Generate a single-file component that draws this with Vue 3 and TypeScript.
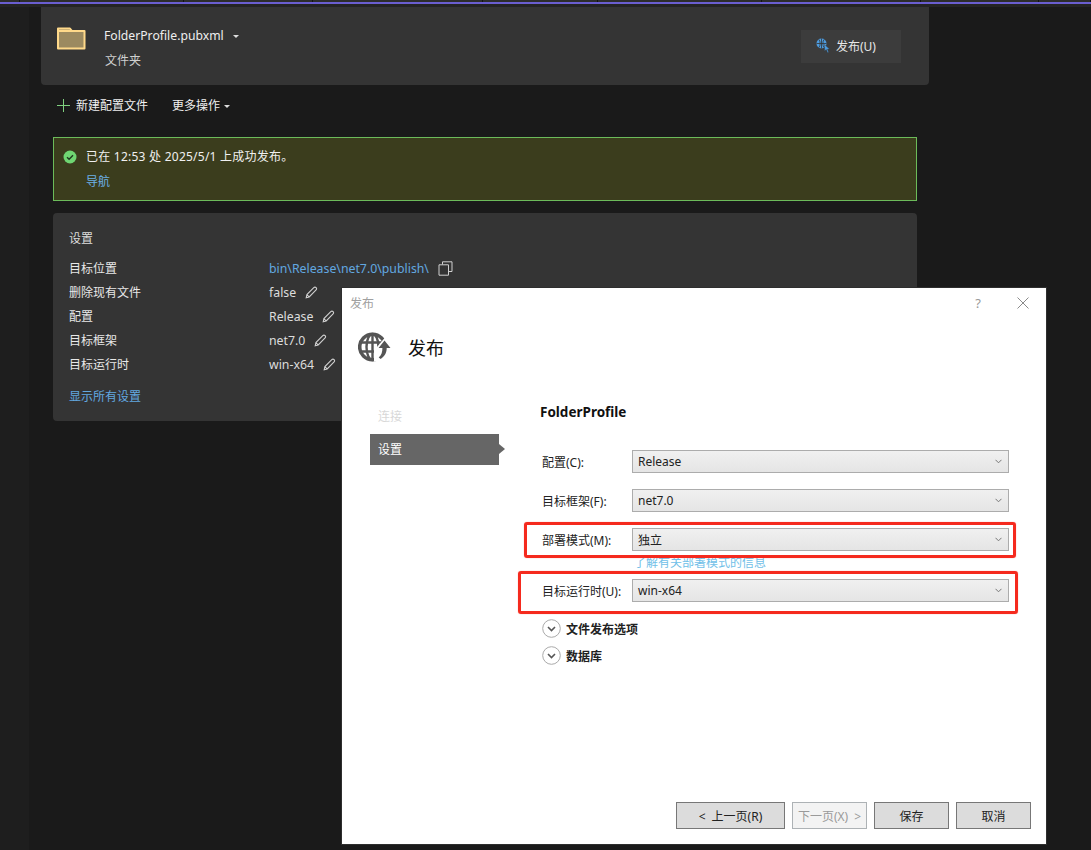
<script setup lang="ts">
const ticks: number[] = [20, 164, 129, 170, 115, 164, 159, 118, 52]
interface Row { label: string; value: string; link?: boolean }
const rows: Row[] = [
  { label: '目标位置', value: 'bin\\Release\\net7.0\\publish\\', link: true },
  { label: '删除现有文件', value: 'false' },
  { label: '配置', value: 'Release' },
  { label: '目标框架', value: 'net7.0' },
  { label: '目标运行时', value: 'win-x64' }
]
const expanders: string[] = ['文件发布选项', '数据库']
</script>

<template>
  <div class="page">
    <div class="top-strip">
      <div class="ticks"><span v-for="(t, i) in ticks" :key="i" :style="{ width: t + 'px' }"></span></div>
      <div class="purple"></div>
    </div>
    <div class="body">
      <div class="gutter"></div>
      <main class="main">
        <section class="head-card">
          <svg class="folder" width="30" height="24" viewBox="0 0 30 24">
            <path d="M2 5V2.500h12l2 2.500h12.500v17.500H2z" fill="#9c8a60" stroke="#ffd98a" stroke-width="2" stroke-linejoin="round" />
            <path d="M2 5h14" stroke="#ffd98a" stroke-width="2" />
          </svg>
          <div class="head-text">
            <div class="profile">FolderProfile.pubxml<i class="caret"></i></div>
            <div class="sub">文件夹</div>
          </div>
          <div class="publish-btn">
            <svg width="15" height="15" viewBox="0 0 15 15">
              <circle cx="5.500" cy="5.500" r="5" fill="#4d9ce0" />
              <path d="M.5 5.500h10M5.500.5v10M3 1.500c1.500 2.500 1.500 5.500 0 8M8 1.500c-1.500 2.500-1.500 5.500 0 8" stroke="#343434" stroke-width="0.8" fill="none" />
              <path d="M8.500 6.500l5 4.500-2 .2 1.200 3-1.200.6-1.200-3.200-1.700 1.400z" fill="#4d9ce0" stroke="#343434" stroke-width="0.4" />
            </svg>
            <span>发布(U)</span>
          </div>
        </section>

        <div class="content">
          <div class="toolbar">
            <svg width="13" height="13" viewBox="0 0 13 13"><path d="M6.500 0v13M0 6.500h13" stroke="#7fd07f" stroke-width="1" /></svg>
            <span class="tb-new">新建配置文件</span>
            <span class="tb-more">更多操作<i class="caret small"></i></span>
          </div>

          <div class="alert">
            <div class="alert-line">
              <svg width="14" height="14" viewBox="0 0 14 14">
                <circle cx="7" cy="7" r="6.500" fill="#6fd672" />
                <path d="M4 7.200l2.100 2.100 3.900-4" stroke="#1f3a1f" stroke-width="1.400" fill="none" />
              </svg>
              <span>已在 12:53 处 2025/5/1 上成功发布。</span>
            </div>
            <a class="nav-link">导航</a>
          </div>

          <section class="settings">
            <div class="settings-title">设置</div>
            <div class="settings-grid">
              <template v-for="r in rows" :key="r.label">
                <span class="s-label">{{ r.label }}</span>
                <span class="s-value" :class="{ link: r.link }">
                  {{ r.value }}
                  <svg v-if="r.link" class="s-icon" width="15" height="15" viewBox="0 0 15 15">
                    <path d="M4.500 3.500V.8h9.500v9.700h-3.200M1 3.800h9.500v10.400H1z" fill="none" stroke="#d0d0d0" stroke-width="1" />
                  </svg>
                  <svg v-else class="s-icon" width="13" height="13" viewBox="0 0 13 13">
                    <path d="M1.200 11.800l.7-3.200L8.800 1.600c.7-.7 1.600-.7 2.300 0s.7 1.600 0 2.300L4.200 11zM2 8.600l2.200 2.400" fill="none" stroke="#cfcfcf" stroke-width="1.100" />
                  </svg>
                </span>
              </template>
            </div>
            <a class="show-all">显示所有设置</a>
          </section>
        </div>
      </main>
    </div>

    <div class="dialog">
      <div class="d-titlebar">
        <span class="d-caption">发布</span>
        <span class="d-help">?</span>
        <svg width="12" height="12" viewBox="0 0 12 12"><path d="M.5.5l11 11M11.500.5l-11 11" stroke="#8a8a8a" stroke-width="1" /></svg>
      </div>
      <div class="d-header">
        <svg width="33" height="30" viewBox="0 0 33 30">
          <g fill="none" stroke="#555" stroke-width="2.400">
            <circle cx="14.500" cy="15" r="12.800" stroke-width="3.600" />
            <ellipse cx="14.500" cy="15" rx="6" ry="13" />
            <path d="M14.500 2v26M2.500 10.500h24M2.500 19.500h24" />
          </g>
          <path d="M27 5.500l8 10H30v4c0 4-3 8-8 10h-6V15h5v0h-2z" fill="#fff" />
          <path d="M26.500 8.500l6 7.500h-3.800c0 4-1.500 8-6 11l-2-1.500c3-2.500 3.700-6 3.700-9.500h-3.800z" fill="#555" />
        </svg>
        <span class="d-title">发布</span>
      </div>
      <div class="d-body">
        <nav class="d-nav">
          <div class="nav-item disabled">连接</div>
          <div class="nav-item active">设置</div>
        </nav>
        <div class="d-form">
          <div class="form-title">FolderProfile</div>
          <div class="form-row">
            <label>配置(C):</label>
            <div class="select">Release<svg width="7" height="5" viewBox="0 0 7 5"><path d="M.5.8l3 3 3-3" fill="none" stroke="#777" stroke-width="1" /></svg></div>
          </div>
          <div class="form-row">
            <label>目标框架(F):</label>
            <div class="select">net7.0<svg width="7" height="5" viewBox="0 0 7 5"><path d="M.5.8l3 3 3-3" fill="none" stroke="#777" stroke-width="1" /></svg></div>
          </div>
          <div class="form-row">
            <label>部署模式(M):</label>
            <div class="select">独立<svg width="7" height="5" viewBox="0 0 7 5"><path d="M.5.8l3 3 3-3" fill="none" stroke="#777" stroke-width="1" /></svg></div>
          </div>
          <div class="learn">了解有关部署模式的信息</div>
          <div class="form-row runtime">
            <label>目标运行时(U):</label>
            <div class="select">win-x64<svg width="7" height="5" viewBox="0 0 7 5"><path d="M.5.8l3 3 3-3" fill="none" stroke="#777" stroke-width="1" /></svg></div>
          </div>
          <div class="expanders">
            <div v-for="e in expanders" :key="e" class="expander">
              <svg width="19" height="19" viewBox="0 0 19 19">
                <circle cx="9.500" cy="9.500" r="8.800" fill="#fff" stroke="#aaa" stroke-width="1" />
                <path d="M6 8l3.500 3.500L13 8" fill="none" stroke="#555" stroke-width="1.600" />
              </svg>
              <span>{{ e }}</span>
            </div>
          </div>
        </div>
      </div>
      <div class="d-footer">
        <button class="btn prev"><span class="lt">&lt;</span>上一页(R)</button>
        <button class="btn next" disabled>下一页(X)<span class="gt">&gt;</span></button>
        <button class="btn save">保存</button>
        <button class="btn cancel">取消</button>
      </div>
      <div class="mark mark-a"></div>
      <div class="mark mark-b"></div>
    </div>
  </div>
</template>

<style scoped>
.page {
  position: relative;
  width: 1091px;
  height: 850px;
  overflow: hidden;
  background: #1a1a1a;
  font-family: "Noto Sans", "Noto Sans CJK SC", sans-serif;
  font-size: 12px;
  color: #e8e8e8;
  display: flex;
  flex-direction: column;
}
.top-strip { height: 7px; background: #242424; flex: none; }
.ticks { display: flex; height: 2px; background: #2c2c2c; }
.ticks span { box-sizing: border-box; height: 2px; border-right: 1px solid #111; }
.purple { height: 2px; background: #6a5ed0; }
.body { flex: 1; display: flex; min-height: 0; }
.gutter { width: 29px; background: #1e1e1e; flex: none; }
.main { width: 900px; padding-left: 12px; box-sizing: border-box; }
.head-card {
  width: 888px;
  height: 78px;
  box-sizing: border-box;
  background: #343434;
  border-radius: 0 0 4px 4px;
  display: flex;
  align-items: flex-start;
  padding: 19px 28px 0 15px;
}
.folder { flex: none; }
.head-text { margin-left: 18px; flex: 1; }
.profile { font-size: 12.200px; line-height: 18px; color: #eee; padding-top: 1px; }
.sub { margin-top: 7px; line-height: 18px; color: #cfcfcf; padding-left: 1px; }
.caret {
  display: inline-block;
  margin-left: 9px;
  vertical-align: middle;
  border-left: 3.500px solid transparent;
  border-right: 3.500px solid transparent;
  border-top: 3.500px solid #ddd;
}
.caret.small { margin-left: 4px; }
.publish-btn {
  width: 100px;
  height: 33px;
  margin-top: 4px;
  padding-bottom: 2px;
  background: #3c3c3c;
  display: flex;
  align-items: center;
  padding-left: 15px;
  box-sizing: border-box;
  gap: 5px;
}
.content { width: 864px; margin-left: 12px; }
.toolbar { display: flex; align-items: center; height: 20px; margin-top: 10px; padding-left: 4px; color: #f0f0f0; }
.tb-new { margin-left: 6px; }
.tb-more { margin-left: 24px; }
.alert {
  margin-top: 22px;
  height: 64px;
  box-sizing: border-box;
  background: #3b3d1d;
  border: 1px solid #6cbb5a;
  padding: 9px 0 0 9px;
}
.alert-line { display: flex; align-items: center; gap: 9px; line-height: 20px; color: #f0f0f0; letter-spacing: 0.240px; }
.nav-link { display: block; margin: 5px 0 0 23px; line-height: 20px; color: #6cb0e6; }
.settings {
  margin-top: 12px;
  height: 208px;
  box-sizing: border-box;
  background: #343434;
  border-radius: 4px;
  padding: 16px 16px 0;
}
.settings-title { line-height: 20px; color: #ddd; }
.settings-grid { display: grid; grid-template-columns: 200px 1fr; grid-auto-rows: 24px; margin-top: 7px; align-items: center; }
.s-label { color: #e8e8e8; }
.s-value { display: flex; align-items: center; gap: 9px; color: #ddd; font-size: 12.300px; }
.s-value.link { color: #62a8e0; }
.show-all { display: block; margin-top: 11px; line-height: 20px; color: #62a8e0; }

.dialog {
  position: absolute;
  left: 342px;
  top: 288px;
  width: 704px;
  height: 556px;
  background: #fff;
  color: #111;
  display: flex;
  flex-direction: column;
  box-shadow: 0 0 0 1px #2e2e2e;
}
.d-titlebar { height: 30px; display: flex; align-items: center; padding: 0 17px 0 8px; flex: none; }
.d-caption { flex: 1; color: #a0a0a0; }
.d-help { color: #999; margin-right: 36px; font-size: 13px; }
.d-header { height: 58px; display: flex; align-items: center; padding-left: 16px; flex: none; }
.d-title { margin-left: 17px; font-size: 18px; color: #111; }
.d-body { display: flex; flex: 1; padding-left: 28px; min-height: 0; }
.d-nav { width: 129px; padding-top: 29px; flex: none; }
.nav-item { height: 31px; line-height: 31px; padding-left: 8px; position: relative; box-sizing: border-box; }
.nav-item.disabled { height: 29px; line-height: 24px; color: #d8d8d8; }
.nav-item.active { background: #666; color: #fff; }
.nav-item.active::after {
  content: "";
  position: absolute;
  left: 100%;
  top: 10px;
  border-top: 5.500px solid transparent;
  border-bottom: 5.500px solid transparent;
  border-left: 6px solid #666;
}
.d-form { margin-left: 41px; width: 469px; padding-top: 26px; }
.form-title { font-weight: 700; font-size: 13.500px; line-height: 20px; color: #111; }
.form-row { display: flex; align-items: center; height: 23px; margin-top: 16px; padding-left: 2px; }
.form-title + .form-row { margin-top: 28px; }
.form-row label { width: 90px; flex: none; color: #222; }
.select {
  width: 377px;
  height: 23px;
  box-sizing: border-box;
  border: 1px solid #acacac;
  background: linear-gradient(#f0f0f0, #e5e5e5);
  display: flex;
  align-items: center;
  justify-content: space-between;
  padding: 0 6px 0 5px;
  color: #222;
}
.learn { height: 16px; margin-top: 4px; margin-left: 92px; padding-left: 2px; font-size: 12px; line-height: 16px; color: #70c0e8; white-space: nowrap; }
.form-row.runtime { margin-top: 8px; }
.expanders { margin-top: 17px; display: flex; flex-direction: column; gap: 8px; padding-left: 2px; }
.expander { display: flex; align-items: center; height: 19px; gap: 5px; font-weight: 700; color: #222; }
.d-footer { height: 42px; flex: none; display: flex; padding-left: 334px; gap: 7px; align-items: flex-start; }
.btn {
  height: 27px;
  box-sizing: border-box;
  border: 1px solid #777;
  background: #dcdcdc;
  font: inherit;
  color: #222;
  padding: 0;
}
.lt { margin-right: 6px; }
.gt { margin-left: 6px; }
.prev { width: 109px; }
.next { width: 75px; background: #f3f3f3; border-color: #adb2b5; color: #9a9a9a; }
.save, .cancel { width: 75px; }
.mark { position: absolute; box-sizing: border-box; border: 3px solid #f52a1e; border-radius: 3px; box-shadow: 0 0 1px rgba(245, 42, 30, 0.6); }
.mark-a { left: 182px; top: 234px; width: 492px; height: 36px; }
.mark-b { left: 176px; top: 283px; width: 500px; height: 43px; }
</style>
